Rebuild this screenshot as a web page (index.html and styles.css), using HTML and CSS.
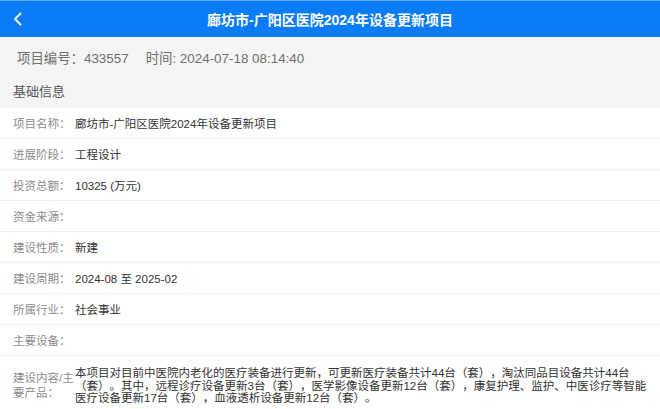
FILE: index.html
```html
<!DOCTYPE html>
<html lang="zh-CN">
<head>
  <meta charset="UTF-8">
  <meta name="viewport" content="width=device-width, initial-scale=1.0">
  <link rel="stylesheet" href="styles.css">
</head>
<body>

<div class="top-bar">
  <span class="back">
    <svg width="10" height="14" viewBox="0 0 10 14"><path d="M7.5 1.5 L2 7 L7.5 12.5" fill="none" stroke="#fff" stroke-width="1.8" stroke-linecap="round" stroke-linejoin="round"/></svg>
  </span>
  <div class="title">廊坊市-广阳区医院2024年设备更新项目</div>
</div>

<div class="meta">
  <span>项目编号：433557</span>
  <span class="meta-time">时间: 2024-07-18 08:14:40</span>
</div>

<div class="section-title">基础信息</div>

<div class="info-list">
  <div class="info-row">
    <div class="label">项目名称：</div>
    <div class="value">廊坊市-广阳区医院2024年设备更新项目</div>
  </div>
  <div class="info-row">
    <div class="label">进展阶段：</div>
    <div class="value">工程设计</div>
  </div>
  <div class="info-row">
    <div class="label">投资总额：</div>
    <div class="value">10325 (万元)</div>
  </div>
  <div class="info-row">
    <div class="label">资金来源：</div>
    <div class="value"></div>
  </div>
  <div class="info-row">
    <div class="label">建设性质：</div>
    <div class="value">新建</div>
  </div>
  <div class="info-row">
    <div class="label">建设周期：</div>
    <div class="value">2024-08 至 2025-02</div>
  </div>
  <div class="info-row">
    <div class="label">所属行业：</div>
    <div class="value">社会事业</div>
  </div>
  <div class="info-row">
    <div class="label">主要设备：</div>
    <div class="value"></div>
  </div>
  <div class="info-row multi">
    <div class="label">建设内容/主要产品：</div>
    <div class="value">本项目对目前中医院内老化的医疗装备进行更新，可更新医疗装备共计44台（套），淘汰同品目设备共计44台（套）。其中，远程诊疗设备更新3台（套），医学影像设备更新12台（套），康复护理、监护、中医诊疗等智能医疗设备更新17台（套），血液透析设备更新12台（套）。</div>
  </div>
</div>

</body>
</html>
```

FILE: styles.css
```css
body {
  margin: 0;
  background: #f5f5f5;
  font-family: "Liberation Sans", "Noto Sans CJK SC", sans-serif;
  color: #333;
  text-spacing-trim: space-all;
}

/* Header bar */
.top-bar {
  height: 36px;
  background: #0a7cf8;
  border-top: 1px solid #5aa8f8;
  position: relative;
  display: flex;
  align-items: center;
  justify-content: center;
}

.back {
  position: absolute;
  left: 13px;
  top: 11px;
}

.title {
  color: #fff;
  font-size: 14px;
  font-weight: bold;
}

.meta {
  height: 39px;
  display: flex;
  align-items: center;
  padding-left: 17px;
  font-size: 13.4px;
  color: #707070;
}

.meta-time {
  margin-left: 17px;
}

.section-title {
  height: 32px;
  line-height: 31px;
  padding-left: 13px;
  font-size: 13px;
  color: #555;
}

.info-list {
  background: #fff;
}

.info-row {
  height: 30px;
  display: flex;
  align-items: center;
  border-bottom: 1px solid #efefef;
  padding: 0 10px 0 13px;
  font-size: 11.5px;
}

.label {
  width: 62px;
  flex-shrink: 0;
  color: #8c8c8c;
}

.value {
  color: #333;
}

.multi {
  height: auto;
  padding-top: 11px;
  padding-bottom: 4px;
}

.multi .label {
  line-height: 15px;
}

.multi .value {
  line-height: 12.6px;
}
```
